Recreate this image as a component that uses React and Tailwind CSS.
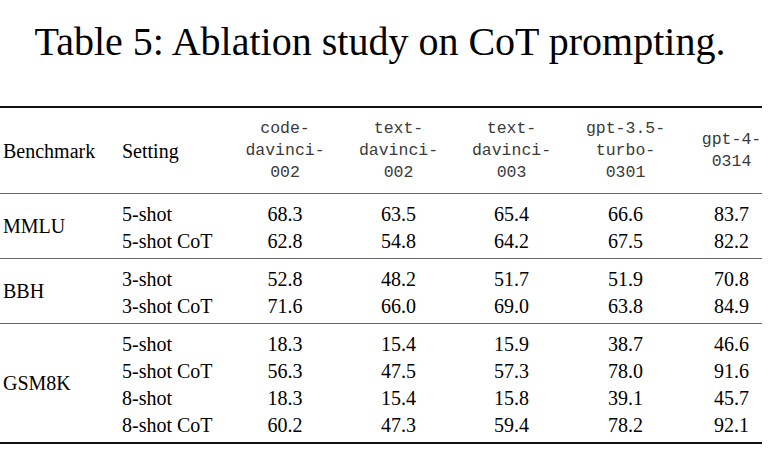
const models = [
  ['code-', 'davinci-', '002'],
  ['text-', 'davinci-', '002'],
  ['text-', 'davinci-', '003'],
  ['gpt-3.5-', 'turbo-', '0301'],
  ['gpt-4-', '0314'],
]

const groups = [
  {
    name: 'MMLU',
    rows: [
      ['5-shot', '68.3', '63.5', '65.4', '66.6', '83.7'],
      ['5-shot CoT', '62.8', '54.8', '64.2', '67.5', '82.2'],
    ],
  },
  {
    name: 'BBH',
    rows: [
      ['3-shot', '52.8', '48.2', '51.7', '51.9', '70.8'],
      ['3-shot CoT', '71.6', '66.0', '69.0', '63.8', '84.9'],
    ],
  },
  {
    name: 'GSM8K',
    rows: [
      ['5-shot', '18.3', '15.4', '15.9', '38.7', '46.6'],
      ['5-shot CoT', '56.3', '47.5', '57.3', '78.0', '91.6'],
      ['8-shot', '18.3', '15.4', '15.8', '39.1', '45.7'],
      ['8-shot CoT', '60.2', '47.3', '59.4', '78.2', '92.1'],
    ],
  },
]

const cols = 'grid grid-cols-[122px_106px_114px_113px_113px_115px_79px]'

export default function App() {
  return (
    <div className="w-[775px] h-[459px] bg-white text-black font-['Liberation_Serif','Times_New_Roman',serif] overflow-hidden">
      <h1 className="pt-[15px] text-center text-[40px] leading-[54px] pr-[15px]">
        Table 5: Ablation study on CoT prompting.
      </h1>

      <div className="mt-[37px] w-[762px]">
        <div className="border-t-2 border-[#111]" />

        {/* header */}
        <div className={`${cols} items-center h-[85px] text-[20px]`}>
          <div className="pl-[3px]">Benchmark</div>
          <div>Setting</div>
          {models.map((m, i) => (
            <div
              key={i}
              className={`text-center font-['Liberation_Mono','Courier_New',monospace] text-[16.5px] leading-[22px] text-[#3a3a3a] ${i === 4 ? 'pl-[18px]' : ''}`}
            >
              {m.map((line) => (
                <div key={line}>{line}</div>
              ))}
            </div>
          ))}
        </div>

        {groups.map((g) => (
          <div key={g.name} className="border-t-[1.5px] border-[#666] flex items-center py-[5px]">
            <div className="w-[122px] pl-[3px] text-[20px]">{g.name}</div>
            <div className="flex-1">
              {g.rows.map((r) => (
                <div key={r[0]} className="grid grid-cols-[106px_114px_113px_113px_115px_79px] h-[27px] items-center text-[20px]">
                  <div>{r[0]}</div>
                  {r.slice(1).map((v, j) => (
                    <div key={j} className={`text-center ${j === 4 ? 'pl-[18px]' : ''}`}>
                      {v}
                    </div>
                  ))}
                </div>
              ))}
            </div>
          </div>
        ))}

        <div className="border-t-2 border-[#111]" />
      </div>
    </div>
  )
}
